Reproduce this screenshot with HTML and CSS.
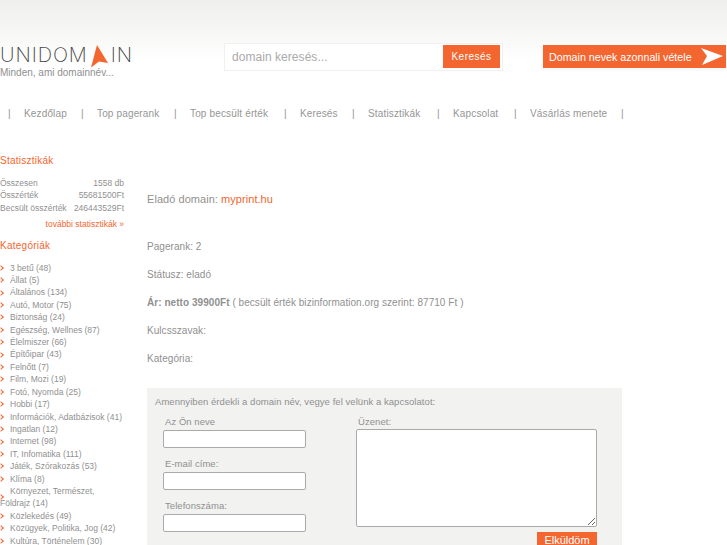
FILE: index.html
```html
<!DOCTYPE html>
<html>
	<head>
		<meta charset="utf-8">
		<title>UniDomain</title>
		<link rel="stylesheet" href="styles.css">
	</head>
	<body><div id="Content">
		<div class="header">
			<div class="brand">
				<div class="logo">UNIDOM<svg class="logoArrow" width="20" height="23" viewBox="0 0 20 23"><path d="M8 0 L19 18 L10 16.500 L2 22.500 Z" fill="#f4662f"/></svg>IN</div>
				<div class="tagline">Minden, ami domainnév...</div>
			</div>
			<div class="search">
				<input type="text" class="searchInput" placeholder="domain keresés...">
				<button class="searchBtn">Keresés</button>
			</div>
			<div class="buy">
				<a class="buyBtn" href="#">Domain nevek azonnali vétele
					<svg width="22" height="18" viewBox="0 0 22 18"><path d="M0 0 L22 8 L1 17 L6 8 Z" fill="#fff"/></svg>
				</a>
			</div>
		</div>

		<div class="nav">
			<span class="navItem"><span class="sep">|</span><a href="#">Kezdőlap</a></span>
			<span class="navItem"><span class="sep">|</span><a href="#">Top pagerank</a></span>
			<span class="navItem"><span class="sep">|</span><a href="#">Top becsült érték</a></span>
			<span class="navItem"><span class="sep">|</span><a href="#">Keresés</a></span>
			<span class="navItem"><span class="sep">|</span><a href="#">Statisztikák</a></span>
			<span class="navItem"><span class="sep">|</span><a href="#">Kapcsolat</a></span>
			<span class="navItem"><span class="sep">|</span><a href="#">Vásárlás menete</a></span>
			<span class="navItem"><span class="sep">|</span></span>
		</div>

		<div class="columns">
			<div class="sidebar">
				<h3>Statisztikák</h3>
				<div class="stat"><span>Összesen</span><span>1558 db</span></div>
				<div class="stat"><span>Összérték</span><span>55681500Ft</span></div>
				<div class="stat"><span>Becsült összérték</span><span>246443529Ft</span></div>
				<div class="more"><a href="#">további statisztikák »</a></div>

				<h3 class="catHead">Kategóriák</h3>
				<ul class="cats">
					<li>3 betű (48)</li>
					<li>Állat (5)</li>
					<li>Általános (134)</li>
					<li>Autó, Motor (75)</li>
					<li>Biztonság (24)</li>
					<li>Egészség, Wellnes (87)</li>
					<li>Élelmiszer (66)</li>
					<li>Építőipar (43)</li>
					<li>Felnőtt (7)</li>
					<li>Film, Mozi (19)</li>
					<li>Fotó, Nyomda (25)</li>
					<li>Hobbi (17)</li>
					<li>Információk, Adatbázisok (41)</li>
					<li>Ingatlan (12)</li>
					<li>Internet (98)</li>
					<li>IT, Infomatika (111)</li>
					<li>Játék, Szórakozás (53)</li>
					<li>Klíma (8)</li>
					<li>Környezet, Természet, Földrajz (14)</li>
					<li>Közlekedés (49)</li>
					<li>Közügyek, Politika, Jog (42)</li>
					<li>Kultúra, Történelem (30)</li>
				</ul>
			</div>

			<div class="main">
				<p class="title">Eladó domain: <a href="#">myprint.hu</a></p>
				<p>Pagerank: 2</p>
				<p>Státusz: eladó</p>
				<p><b>Ár: netto 39900Ft</b> ( becsült érték bizinformation.org szerint: 87710 Ft )</p>
				<p>Kulcsszavak:</p>
				<p>Kategória:</p>

				<div class="contact">
					<div class="intro">Amennyiben érdekli a domain név, vegye fel velünk a kapcsolatot:</div>
					<div class="formCols">
						<div class="formLeft">
							<label>Az Ön neve</label>
							<input type="text">
							<label>E-mail címe:</label>
							<input type="text">
							<label>Telefonszáma:</label>
							<input type="text">
						</div>
						<div class="formRight">
							<label>Üzenet:</label>
							<textarea></textarea>
							<button class="send">Elküldöm</button>
						</div>
					</div>
				</div>
			</div>
		</div>
	</div></body>
</html>
```

FILE: styles.css
```css
html, body {
	margin: 0;
	height: 545px;
	overflow: hidden;
}
body {
	font-family: "Liberation Sans", Arial, sans-serif;
	font-size: 10px;
	color: #909090;
	background: #fff;
}
a {
	color: inherit;
	text-decoration: none;
}
.header {
	display: flex;
	height: 98px;
	padding-top: 43px;
	box-sizing: border-box;
	background: linear-gradient(to bottom, #efefed 0px, #f6f6f5 30px, #fff 62px);
}
.brand {
	width: 224px;
}
.logo {
	display: flex;
	align-items: flex-end;
	height: 22px;
	font-family: "Inter", sans-serif;
	font-weight: 200;
	font-size: 20px;
	line-height: 19px;
	color: #444;
	letter-spacing: 0.900px;
}
.logoArrow {
	margin: 0 2px -3px 1px;
}
.tagline {
	margin-top: 1px;
	font-size: 10px;
	line-height: 13px;
	color: #909090;
}
.search {
	display: flex;
	width: 279px;
	height: 28px;
	padding: 1px 2px 2px 0;
	box-sizing: border-box;
	border: 1px solid #f0f0ee;
	background: #fff;
}
.searchInput {
	flex: 1;
	min-width: 0;
	padding: 0 0 0 7px;
	border: 0;
	outline: 0;
	background: transparent;
	font-family: "Liberation Sans", Arial, sans-serif;
	font-size: 12px;
	letter-spacing: 0.05px;
}
.searchInput::placeholder {
	color: #aaa;
	opacity: 1;
}
.searchBtn {
	width: 57px;
	padding: 0;
	border: 0;
	background: #f4662f;
	color: #fff;
	font-family: "Liberation Sans", Arial, sans-serif;
	font-size: 10px;
	letter-spacing: 0.5px;
}
.buy {
	margin-left: 38px;
	width: 186px;
	height: 28px;
	padding: 2px 1px 3px 2px;
	box-sizing: border-box;
	background: #fafafa;
}
.buyBtn {
	display: flex;
	align-items: center;
	justify-content: space-between;
	height: 23px;
	padding: 0 3px 0 6px;
	background: #f4662f;
	color: #fff;
	font-size: 10.700px;
}
.nav {
	display: grid;
	grid-template-columns: 73px 93px 110px 68px 85px 77px 107px 1px;
	height: 31px;
	padding: 10px 0 0 8px;
	box-sizing: border-box;
	line-height: 12px;
	color: #969696;
	letter-spacing: 0.15px;
}
.navItem {
	display: flex;
	gap: 15px;
}
.nav .sep {
	width: 1px;
}
.columns {
	display: flex;
	padding-top: 26px;
}
.sidebar {
	width: 124px;
	flex: none;
	font-size: 8.500px;
	line-height: 12.400px;
}
h3 {
	margin: 0 0 10px;
	font-size: 10px;
	font-weight: normal;
	line-height: 12px;
	letter-spacing: 0.25px;
	color: #f4662f;
}
.stat {
	display: flex;
	justify-content: space-between;
}
.more {
	margin-top: 4px;
	text-align: right;
	color: #f4662f;
}
.catHead {
	margin: 9px 0 10px;
}
.cats {
	margin: 0;
	padding: 0;
	list-style: none;
}
.cats li {
	position: relative;
	text-indent: 10px;
}
.cats li:before {
	content: "";
	position: absolute;
	left: -1px;
	top: 50%;
	width: 3px;
	height: 3px;
	margin-top: -2px;
	border-top: 1px solid #f4662f;
	border-right: 1px solid #f4662f;
	transform: rotate(45deg);
}
.main {
	margin-left: 23px;
	width: 475px;
	flex: none;
	padding-top: 38px;
	font-size: 10px;
	line-height: 13px;
	letter-spacing: 0.05px;
}
.main p {
	margin: 0 0 15px;
}
.main .title {
	margin-bottom: 34px;
	font-size: 11px;
}
.main .title a {
	color: #f4662f;
}
.contact {
	margin-top: 23px;
	height: 170px;
	padding: 7px 8px;
	box-sizing: border-box;
	background: #f2f2f1;
	font-size: 9.500px;
}
.intro {
	line-height: 13px;
	margin-bottom: 7px;
}
.formCols {
	display: flex;
}
.formLeft {
	width: 193px;
	margin-left: 8px;
}
label {
	display: block;
	margin-left: 2px;
	line-height: 13px;
}
.formLeft input {
	display: block;
	width: 143px;
	height: 18px;
	margin: 2px 0 9px;
	padding: 0;
	box-sizing: border-box;
	border: 1px solid #aaa;
	border-radius: 2px;
	background: #fff;
}
.formRight {
	width: 241px;
}
textarea {
	display: block;
	width: 241px;
	height: 98px;
	margin: 1px 0 5px;
	padding: 0;
	box-sizing: border-box;
	border: 1px solid #aaa;
	border-radius: 2px;
	background: #fff;
}
.send {
	display: block;
	margin-left: auto;
	width: 60px;
	height: 16px;
	padding: 0;
	border: 0;
	background: #f4662f;
	color: #fff;
	font-family: "Liberation Sans", Arial, sans-serif;
	font-size: 11px;
	line-height: 16px;
}
```
